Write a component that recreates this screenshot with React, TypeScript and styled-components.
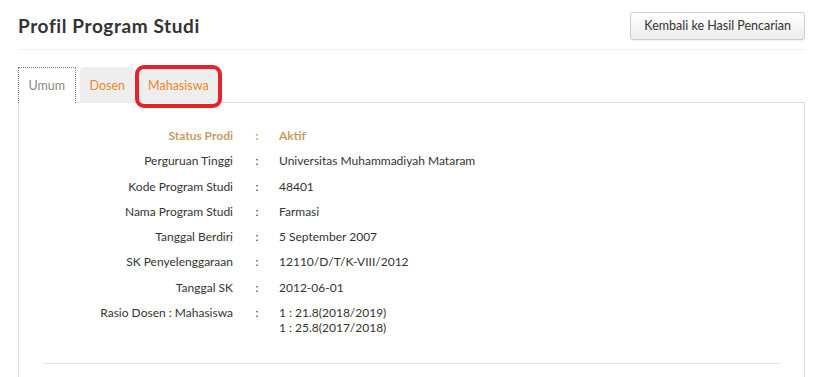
import React from "react";
import styled, { createGlobalStyle } from "styled-components";

const Global = createGlobalStyle`
  html, body { margin: 0; padding: 0; background: #fff; }
  body { font-family: Lato, "Noto Sans", sans-serif; color: #333; }
`;

const Page = styled.div`
  width: 824px;
  height: 377px;
  overflow: hidden;
  padding: 0 19px 0 18px;
  box-sizing: border-box;
`;

const Header = styled.div`
  display: flex;
  align-items: center;
  justify-content: space-between;
  height: 50px;
  border-bottom: 1px solid #eee;
  box-sizing: border-box;
`;

const Title = styled.h1`
  margin: 0;
  font-size: 19px;
  font-weight: 700;
  color: #333;
  letter-spacing: 0.6px;
  padding-top: 2px;
`;

const BackButton = styled.button`
  height: 28px;
  padding: 0 13px;
  margin-top: 2px;
  font-family: inherit;
  font-size: 12.5px;
  color: #333;
  border: 1px solid #ccc;
  border-radius: 3px;
  background: linear-gradient(#fff, #ececec);
  box-shadow: 0 1px 1px rgba(0, 0, 0, 0.05);
`;

const TabBar = styled.div`
  display: flex;
  margin-top: 17px;
`;

const Tab = styled.div<{ $active?: boolean }>`
  position: relative;
  height: 36px;
  padding: 0 ${p => (p.$active ? "9.5px" : "9px")};
  margin-right: ${p => (p.$active ? "4px" : "3px")};
  display: flex;
  align-items: center;
  box-sizing: border-box;
  font-size: 12.5px;
  color: ${p => (p.$active ? "#888" : "#e8892a")};
  background: ${p => (p.$active ? "#fff" : "#eee")};
  border: ${p => (p.$active ? "1px dotted #777" : "1px solid #eee")};
  border-bottom: none;
  border-radius: ${p => (p.$active ? "0" : "4px 4px 0 0")};
  margin-bottom: -1px;
  z-index: ${p => (p.$active ? 1 : 0)};
`;

const Highlight = styled.span`
  position: absolute;
  left: -4px;
  right: -4px;
  top: -3px;
  bottom: -5px;
  border: 4px solid #e4232b;
  border-radius: 9px;
  pointer-events: none;
  z-index: 2;
`;

const Panel = styled.div`
  border: 1px solid #ddd;
  border-bottom: none;
  height: 290px;
  padding: 20px 24px 0 24px;
  box-sizing: border-box;
`;

const InfoTable = styled.div`
  display: grid;
  grid-template-columns: 190px 46px 1fr;
  align-items: start;
`;

const Label = styled.div<{ $hl?: boolean }>`
  text-align: right;
  font-size: 12px;
  line-height: 15px;
  padding: 5px 0 5.3px;
  color: ${p => (p.$hl ? "#c59b62" : "#333")};
  font-weight: ${p => (p.$hl ? 700 : 400)};
`;

const Colon = styled(Label)`
  text-align: center;
  padding-left: 2px;
`;

const Value = styled(Label)`
  text-align: left;
`;

const Divider = styled.div`
  height: 1px;
  background: #e6e6e6;
  margin: 23px 0 0 0;
`;

const rows: { label: string; value: string[]; hl?: boolean }[] = [
  { label: "Status Prodi", value: ["Aktif"], hl: true },
  { label: "Perguruan Tinggi", value: ["Universitas Muhammadiyah Mataram"] },
  { label: "Kode Program Studi", value: ["48401"] },
  { label: "Nama Program Studi", value: ["Farmasi"] },
  { label: "Tanggal Berdiri", value: ["5 September 2007"] },
  { label: "SK Penyelenggaraan", value: ["12110/D/T/K-VIII/2012"] },
  { label: "Tanggal SK", value: ["2012-06-01"] },
  { label: "Rasio Dosen : Mahasiswa", value: ["1 : 21.8(2018/2019)", "1 : 25.8(2017/2018)"] },
];

export default function App() {
  return (
    <Page>
      <Global />
      <Header>
        <Title>Profil Program Studi</Title>
        <BackButton>Kembali ke Hasil Pencarian</BackButton>
      </Header>
      <TabBar>
        <Tab $active>Umum</Tab>
        <Tab>Dosen</Tab>
        <Tab>
          Mahasiswa
          <Highlight />
        </Tab>
      </TabBar>
      <Panel>
        <InfoTable>
          {rows.map(r => (
            <React.Fragment key={r.label}>
              <Label $hl={r.hl}>{r.label}</Label>
              <Colon $hl={r.hl}>:</Colon>
              <Value $hl={r.hl}>
                {r.value.map(v => (
                  <div key={v}>{v}</div>
                ))}
              </Value>
            </React.Fragment>
          ))}
        </InfoTable>
        <Divider />
      </Panel>
    </Page>
  );
}
